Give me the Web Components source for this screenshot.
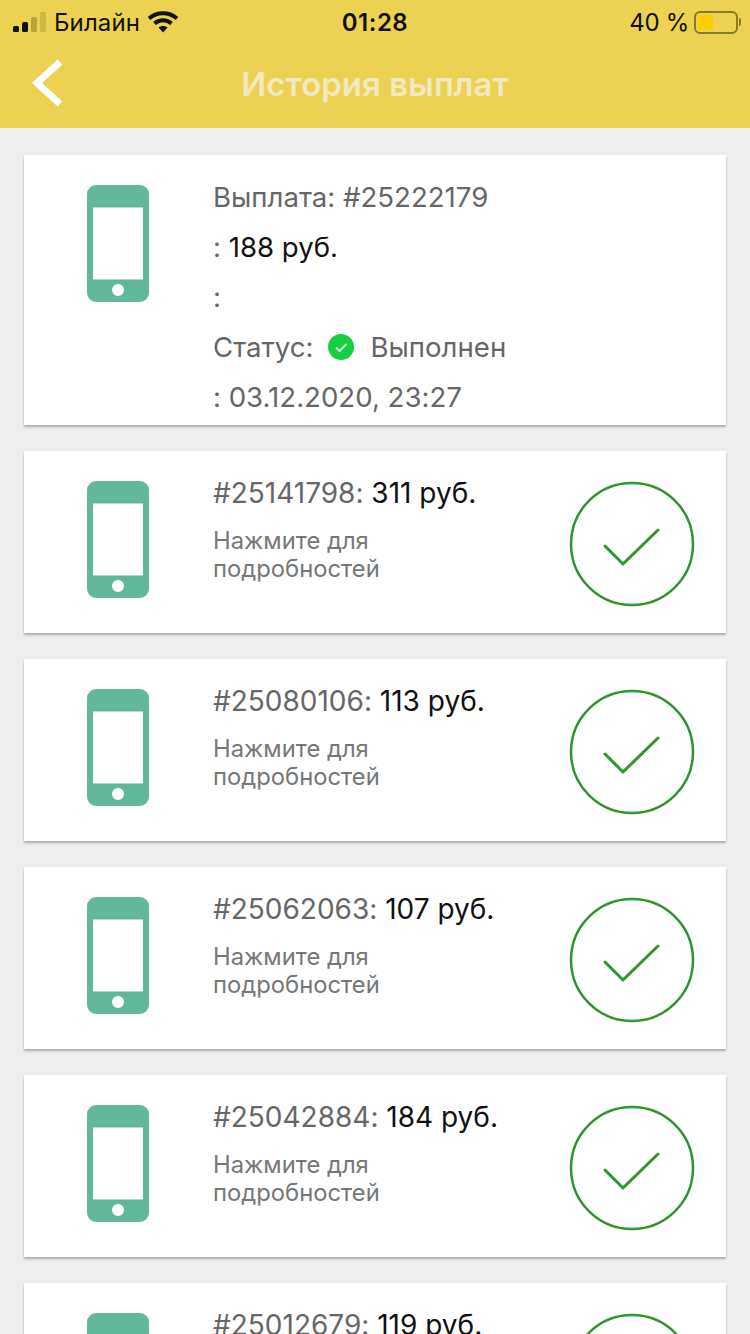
<!DOCTYPE html>
<html lang="ru"><head><meta charset="utf-8"><title>История выплат</title>
<style>
html,body{margin:0;height:1334px;overflow:hidden;background:#eeeeee;font-family:Inter,"Noto Sans",sans-serif;font-feature-settings:"calt" 0}
</style></head><body>
<app-screen>
<status-bar carrier="Билайн" time="01:28" battery="40 %"></status-bar>
<nav-bar title="История выплат"></nav-bar>
<payout-list>
<payout-detail num="#25222179" amount="188 руб." date=": 03.12.2020, 23:27"></payout-detail>
<payout-card num="#25141798:" amount="311 руб."></payout-card>
<payout-card num="#25080106:" amount="113 руб."></payout-card>
<payout-card num="#25062063:" amount="107 руб."></payout-card>
<payout-card num="#25042884:" amount="184 руб."></payout-card>
<payout-card num="#25012679:" amount="119 руб."></payout-card>
</payout-list>
</app-screen>
<script>
const el=(name,fn)=>customElements.define(name,class extends HTMLElement{
  connectedCallback(){ if(this.shadowRoot) return; this.attachShadow({mode:'open'}).innerHTML=fn(this); }
});
el('app-screen',()=>`<style>:host{display:flex;flex-direction:column;height:1334px;overflow:hidden}</style><slot></slot>`);
el('status-bar',h=>`<style>
:host{display:flex;flex:none;align-items:center;height:44px;padding:0 0 0 13px;background:#edd152;color:#111;font-size:24px;position:relative;box-sizing:border-box}
.sig{display:flex;align-items:flex-end;gap:3px;height:20px}
.sig i{display:block;width:6px;border-radius:1.5px;background:#111}
.carrier{margin-left:8px;letter-spacing:.1px}
.wifi{margin-left:8px}
.time{position:absolute;left:0;right:0;text-align:center;font-weight:600;letter-spacing:.5px}
.right{margin-left:auto;display:flex;align-items:center;gap:5px;padding-right:12px}
.right span:first-child{letter-spacing:-.3px}
.bat{width:44px;height:23px;box-sizing:border-box;border:2px solid #8a7a20;border-radius:6px;padding:2px;position:relative}
.bat b{display:block;width:15px;height:100%;background:#fcce00;border-radius:3px}
.bat:after{content:"";position:absolute;right:-5px;top:5px;width:2px;height:8px;background:#8a7a20;border-radius:0 2px 2px 0}
</style>
<span class="sig"><i style="height:6px"></i><i style="height:10px"></i><i style="height:15px;background:#b9a43a"></i><i style="height:20px;background:#cdb846"></i></span>
<span class="carrier">${h.getAttribute('carrier')}</span>
<svg class="wifi" width="30" height="22" viewBox="0 0 30 22"><path d="M1 7.5C9 .5 21 .5 29 7.5" fill="none" stroke="#111" stroke-width="4"/><path d="M6.5 12.5c5-4.2 12-4.2 17 0" fill="none" stroke="#111" stroke-width="4"/><path d="M10.5 16.5c2.6-2 6.4-2 9 0L15 21.5z" fill="#111"/></svg>
<span class="time">${h.getAttribute('time')}</span>
<span class="right"><span>${h.getAttribute('battery')}</span><span class="bat"><b></b></span></span>`);
el('nav-bar',h=>`<style>
:host{display:flex;flex:none;align-items:center;justify-content:center;height:84px;background:#edd152;position:relative}
svg{position:absolute;left:30px;top:13px}
h1{margin:0 0 4px;font-size:33px;font-weight:600;color:#f1e9bf}
</style>
<svg width="36" height="52" viewBox="0 0 36 52"><path d="M30 5 7 26l23 21" fill="none" stroke="#fff" stroke-width="7"/></svg>
<h1>${h.getAttribute('title')}</h1>`);
el('payout-list',()=>`<style>:host{display:flex;flex:none;flex-direction:column;gap:26px;padding:27px 24px 0}</style><slot></slot>`);
el('phone-icon',()=>`<style>:host{display:block;width:64px;height:117px;flex:none}svg{display:block}</style>
<svg width="64" height="117" viewBox="0 0 64 117"><path fill-rule="evenodd" fill="#62b89b" d="M10 0h44a9 9 0 0 1 9 9v99a9 9 0 0 1-9 9H10a9 9 0 0 1-9-9V9a9 9 0 0 1 9-9zM7 22.500v72h50v-72zM32 99a6 6 0 1 0 0 12 6 6 0 0 0 0-12z"/></svg>`);
el('check-circle',()=>`<style>:host{display:block;width:126px;height:126px;flex:none}svg{display:block}</style>
<svg width="126" height="126" viewBox="0 0 126 126"><circle cx="63" cy="63" r="61" fill="none" stroke="#2f952f" stroke-width="2.500"/><path d="M36 65l18 18 35-34" fill="none" stroke="#2f952f" stroke-width="3" stroke-linecap="round" stroke-linejoin="round"/></svg>`);
el('payout-detail',h=>`<style>
:host{display:flex;flex:none;background:#fff;height:270px;box-sizing:border-box;padding:30px 0 0 62px;box-shadow:0 2px 2px rgba(0,0,0,.28);font-size:27.600px;color:#666}
.txt{margin:-13px 0 0 63px;line-height:50px}
.row{height:50px;display:flex;align-items:center;white-space:pre}
b{font-weight:400;color:#111}
.dot{width:26px;height:26px;margin:0 16px 0 15px}
</style>
<phone-icon></phone-icon>
<div class="txt">
<div class="row">Выплата: ${h.getAttribute('num')}</div>
<div class="row">: <b>${h.getAttribute('amount')}</b></div>
<div class="row">:</div>
<div class="row">Статус:<svg class="dot" viewBox="0 0 26 26"><circle cx="13" cy="13" r="13" fill="#16cf40"/><path d="M8 13.500l3.500 3.500L18.500 10" fill="none" stroke="#d8f5dd" stroke-width="1.800"/></svg>Выполнен</div>
<div class="row">${h.getAttribute('date')}</div>
</div>`);
el('payout-card',h=>`<style>
:host{display:flex;flex:none;align-items:flex-start;background:#fff;height:182px;box-sizing:border-box;padding:30px 31px 0 62px;box-shadow:0 2px 2px rgba(0,0,0,.28)}
.txt{flex:1;margin:-6px 0 0 63px;color:#666}
.t{font-size:28px;line-height:36px;white-space:pre}
.t b{font-weight:400;color:#111}
.s{font-size:23.800px;line-height:28px;margin-top:16px;width:200px;color:#777}
</style>
<phone-icon></phone-icon>
<div class="txt"><div class="t">${h.getAttribute('num')} <b>${h.getAttribute('amount')}</b></div><div class="s">Нажмите для подробностей</div></div>
<check-circle></check-circle>`);
</script>
</body></html>
